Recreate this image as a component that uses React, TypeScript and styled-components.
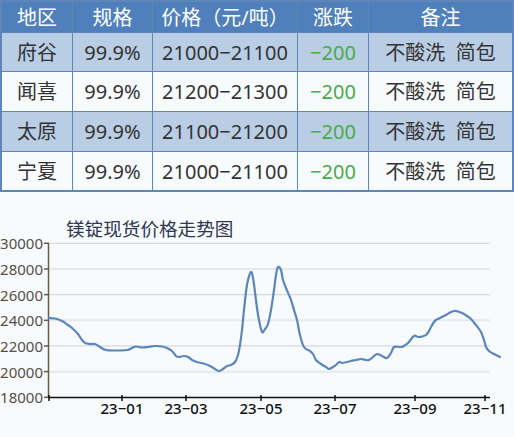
import React from "react";
import styled, { createGlobalStyle } from "styled-components";

const Global = createGlobalStyle`
  html, body { margin: 0; padding: 0; background: #f7fbfe; }
  body { font-family: "Noto Sans", "Noto Sans CJK SC", sans-serif; }
`;

const Page = styled.div`
  width: 514px;
  height: 437px;
  background: #f7fbfe;
  display: flex;
  flex-direction: column;
  overflow: hidden;
`;

const Table = styled.div`
  display: grid;
  grid-template-columns: 70px 79px 144px 70px 1fr;
  grid-template-rows: 30px 38px 39px 39px 38px;
  gap: 1px;
  padding: 2px;
  background: #5f86bb;
  width: 514px;
  box-sizing: border-box;
`;

const Cell = styled.div<{ $kind: "head" | "alt" | "plain"; $green?: boolean }>`
  display: flex;
  align-items: center;
  justify-content: center;
  font-family: "Noto Sans", "Noto Sans CJK SC", sans-serif;
  font-size: 20px;
  white-space: pre;
  line-height: 1;
  padding-top: ${(p) => (p.$kind === "head" ? "2px" : "1px")};
  box-sizing: border-box;
  background: ${(p) =>
    p.$kind === "head" ? "#4f80bc" : p.$kind === "alt" ? "#b9cde4" : "#f8fbfe"};
  color: ${(p) => (p.$kind === "head" ? "#ffffff" : p.$green ? "#47ac4a" : "#333333")};
`;

const ChartSection = styled.div`
  display: flex;
  flex-direction: column;
`;

const Title = styled.div`
  margin-top: 24px;
  padding-left: 66px;
  height: 24px;
  line-height: 24px;
  font-family: "Noto Sans CJK SC", sans-serif;
  font-size: 18.6px;
  color: #2f3650;
`;

const ChartSvg = styled.svg`
  display: block;
  overflow: visible;
`;

const headers = ["地区", "规格", "价格（元/吨）", "涨跌", "备注"];
const rows = [
  ["府谷", "99.9%", "21000−21100", "−200", "不酸洗\u00a0\u00a0简包"],
  ["闻喜", "99.9%", "21200−21300", "−200", "不酸洗\u00a0\u00a0简包"],
  ["太原", "99.9%", "21100−21200", "−200", "不酸洗\u00a0\u00a0简包"],
  ["宁夏", "99.9%", "21000−21100", "−200", "不酸洗\u00a0\u00a0简包"],
];

const pts: [number, number][] = [
  [49, 318], [55, 318.5], [62, 321], [68, 325], [72, 328], [78, 334], [82, 340], [85, 343],
  [90, 344], [95, 344], [100, 347], [106, 350], [115, 350.5], [127, 350], [132, 348],
  [136, 346.5], [142, 347.5], [148, 347], [155, 346], [162, 346.5], [167, 348], [172, 351],
  [176, 356], [179, 357], [184, 356], [188, 357], [192, 360], [197, 362], [205, 364],
  [210, 366], [215, 369], [219, 371], [223, 369], [227, 366], [231, 365], [235, 362],
  [238, 355], [240, 345], [242, 330], [244, 310], [246, 292], [248, 280], [251, 272],
  [253, 278], [255, 292], [257, 308], [259, 320], [262, 332], [265, 329], [268, 324],
  [271, 310], [274, 290], [276, 275], [278, 267], [281, 270], [283, 280], [286, 288],
  [291, 300], [294, 310], [297, 320], [300, 335], [304, 347], [310, 351], [313, 354],
  [316, 360], [321, 364], [326, 367], [329, 369], [333, 367], [336, 365], [339, 362],
  [342, 363], [347, 362], [351, 361], [356, 360], [361, 359], [366, 360], [369, 360],
  [373, 357], [377, 354], [382, 356], [387, 358], [391, 353], [394, 347], [400, 347],
  [403, 346.5], [408, 343], [414, 336], [418, 337], [422, 336.5], [426, 335], [429, 331],
  [431, 327], [434, 322], [436, 320], [440, 318], [446, 315], [450, 312.5], [454, 311],
  [458, 311.5], [462, 313], [467, 316], [471, 319], [476, 325], [481, 332], [484, 340],
  [486, 347], [489, 351], [494, 354], [500, 357],
];

function smoothPath(p: [number, number][]) {
  let d = `M${p[0][0]},${p[0][1]}`;
  for (let i = 0; i < p.length - 1; i++) {
    const p0 = p[i - 1] || p[i];
    const p1 = p[i];
    const p2 = p[i + 1];
    const p3 = p[i + 2] || p2;
    const t = 0.18;
    const c1x = p1[0] + (p2[0] - p0[0]) * t;
    const c1y = p1[1] + (p2[1] - p0[1]) * t;
    const c2x = p2[0] - (p3[0] - p1[0]) * t;
    const c2y = p2[1] - (p3[1] - p1[1]) * t;
    d += ` C${c1x.toFixed(1)},${c1y.toFixed(1)} ${c2x.toFixed(1)},${c2y.toFixed(1)} ${p2[0]},${p2[1]}`;
  }
  return d;
}

const TOP = 240;
const yOf = (v: number) => 397.3 - ((v - 18000) / 2000) * 25.67;
const yTicks = [30000, 28000, 26000, 24000, 22000, 20000, 18000];
const xTicks: [number, string][] = [
  [122, "23−01"],
  [186, "23−03"],
  [261, "23−05"],
  [335, "23−07"],
  [415, "23−09"],
  [485, "23−11"],
];

function Chart() {
  return (
    <ChartSvg width={514} height={437 - TOP} viewBox={`0 ${TOP} 514 ${437 - TOP}`}>
      {yTicks.slice(0, 6).map((v, i) => (
        <line
          key={v}
          x1={49}
          x2={490}
          y1={yOf(v)}
          y2={yOf(v)}
          stroke={i % 2 === 1 ? "#e6e9ec" : "#d6d9dd"}
          strokeWidth={i % 2 === 1 ? 2 : 1.2}
        />
      ))}
      <line x1={48.5} x2={48.5} y1={yOf(30000)} y2={398} stroke="#6b5a4b" strokeWidth={1.5} />
      {yTicks.map((v) => (
        <g key={v}>
          <line x1={44} x2={49} y1={yOf(v)} y2={yOf(v)} stroke="#6b5a4b" strokeWidth={1.5} />
          <text
            x={43}
            y={yOf(v)}
            textAnchor="end"
            dominantBaseline="central"
            fontFamily="Noto Sans, sans-serif"
            fontSize={15}
            fill="#594e45"
          >
            {v}
          </text>
        </g>
      ))}
      <line x1={48} x2={490} y1={397.5} y2={397.5} stroke="#111" strokeWidth={1.5} />
      <line x1={49} x2={49} y1={395} y2={401} stroke="#111" strokeWidth={1.5} />
      {xTicks.map(([x, label]) => (
        <g key={label}>
          <line x1={x} x2={x} y1={395} y2={401} stroke="#111" strokeWidth={1.5} />
          <text
            x={x}
            y={408}
            textAnchor="middle"
            dominantBaseline="central"
            fontFamily="Noto Sans, sans-serif"
            fontSize={15}
            fontWeight={500}
            fill="#111"
          >
            {label}
          </text>
        </g>
      ))}
      <path
        d={smoothPath(pts)}
        fill="none"
        stroke="#5b86b9"
        strokeWidth={2.2}
        strokeLinejoin="round"
        strokeLinecap="round"
      />
    </ChartSvg>
  );
}

export default function App() {
  return (
    <Page>
      <Global />
      <Table>
        {headers.map((h) => (
          <Cell key={h} $kind="head">
            {h}
          </Cell>
        ))}
        {rows.map((r, ri) =>
          r.map((c, ci) => (
            <Cell key={`${ri}-${ci}`} $kind={ri % 2 === 0 ? "alt" : "plain"} $green={ci === 3}>
              {c}
            </Cell>
          ))
        )}
      </Table>
      <ChartSection>
        <Title>镁锭现货价格走势图</Title>
        <Chart />
      </ChartSection>
    </Page>
  );
}
